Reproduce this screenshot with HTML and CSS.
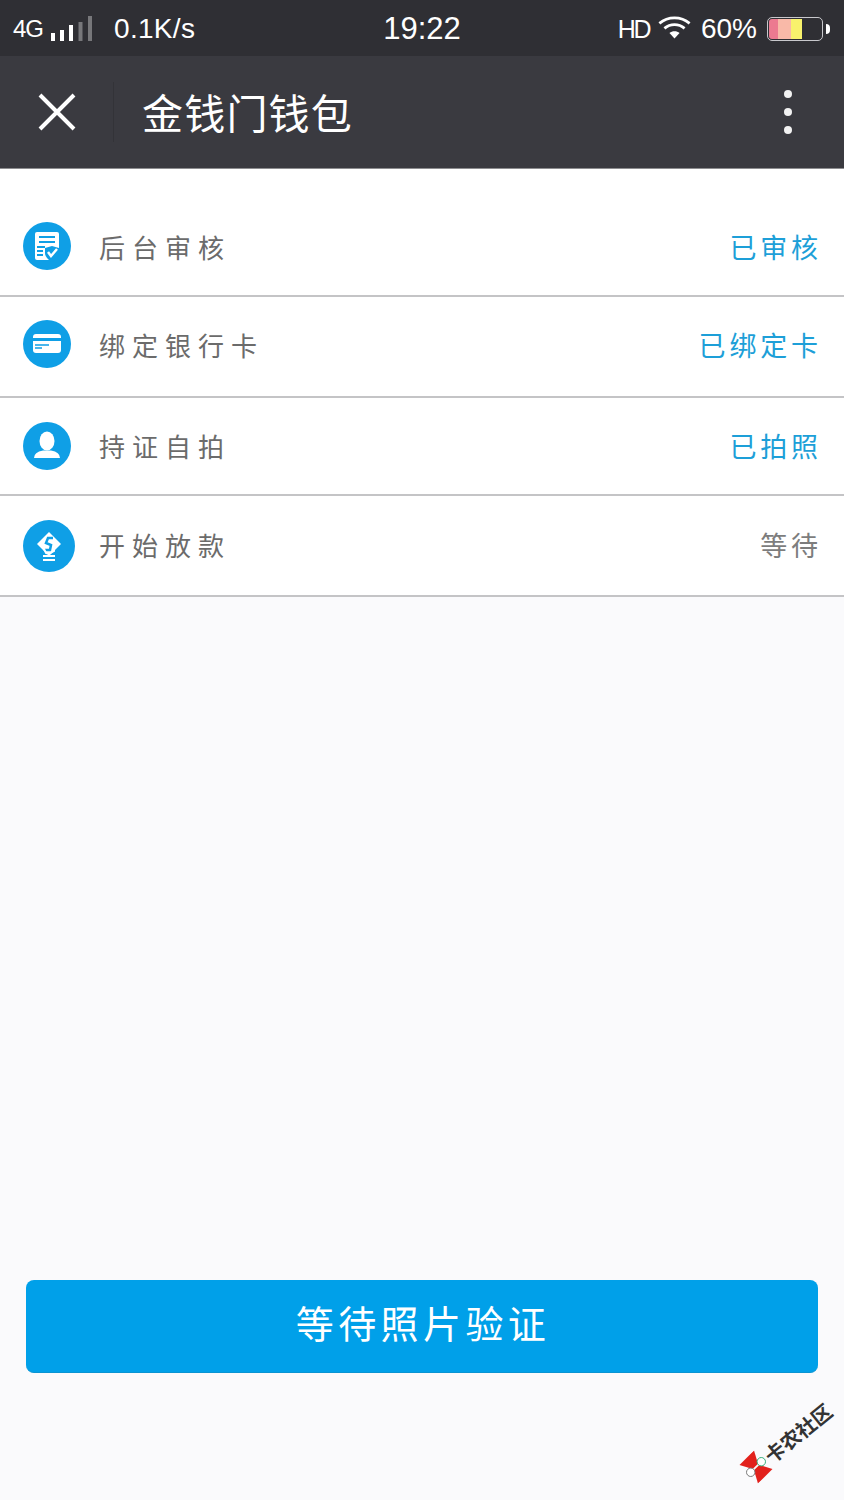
FILE: index.html
```html
<!doctype html>
<html lang="zh-CN">
  <head>
    <meta charset="UTF-8" />
    <meta name="viewport" content="width=device-width, initial-scale=1.0" />
    <title>金钱门钱包</title>
    <link rel="stylesheet" href="styles.css">
  </head>
  <body>
    <div class="status-bar">
      <div class="status-left">
        <span class="net">4G</span>
        <svg class="signal" width="44" height="28" viewBox="0 0 44 28">
          <rect x="1" y="19" width="4" height="8" fill="#fff" />
          <rect x="10" y="16" width="4" height="11" fill="#fff" />
          <rect x="19" y="11" width="4" height="16" fill="#fff" />
          <rect x="28.500" y="8" width="4" height="19" fill="#77777a" />
          <rect x="38" y="2" width="4" height="25" fill="#77777a" />
        </svg>
        <span class="speed">0.1K/s</span>
      </div>
      <div class="clock">19:22</div>
      <div class="status-right">
        <span class="hd">HD</span>
        <svg class="wifi" width="33" height="25" viewBox="0 0 36 26">
          <path d="M1.500 8.500C11 .5 25 .5 34.500 8.500" fill="none" stroke="#fff" stroke-width="3" />
          <path d="M7 14C13.500 8.500 22.500 8.500 29 14" fill="none" stroke="#fff" stroke-width="3" />
          <path d="M12.500 19C15.500 16.500 20.500 16.500 23.500 19L18 25Z" fill="#fff" />
        </svg>
        <span class="pct">60%</span>
        <div class="battery">
          <div class="battery-body">
            <span class="cell cell-red"></span>
            <span class="cell cell-pink"></span>
            <span class="cell cell-yellow"></span>
          </div>
          <span class="battery-tip"></span>
        </div>
      </div>
    </div>

    <div class="nav-bar">
      <svg class="close" width="38" height="38" viewBox="0 0 38 38">
        <path d="M2 2L36 36M36 2L2 36" stroke="#fff" stroke-width="4" fill="none" />
      </svg>
      <span class="nav-divider"></span>
      <h1 class="nav-title">金钱门钱包</h1>
      <div class="more">
        <span class="dot"></span>
        <span class="dot"></span>
        <span class="dot"></span>
      </div>
    </div>

    <div class="steps">
      <div class="step step-first">
        <svg class="step-icon" width="48" height="48" viewBox="0 0 48 48">
          <circle cx="24" cy="24" r="24" fill="#0f9fe6" />
          <path d="M14 10H34Q36 10 36 12V30L27 38H14Q12 38 12 36V12Q12 10 14 10Z" fill="#fff" />
          <path d="M16 15H32M16 20H32M14 25H22M14 29H20M14 33H20" stroke="#0f9fe6" stroke-width="2" fill="none" />
          <path d="M22 26L29 24L36 26V31Q36 36 29 40Q22 36 22 31Z" fill="#0f9fe6" />
          <path d="M25 30L28 34L34 27" stroke="#fff" stroke-width="2.500" fill="none" />
        </svg>
        <span class="step-name">后台审核</span>
        <span class="step-state state-done">已审核</span>
      </div>
      <div class="step step-card">
        <svg class="step-icon" width="48" height="48" viewBox="0 0 48 48">
          <circle cx="24" cy="24" r="24" fill="#0f9fe6" />
          <rect x="10" y="14" width="28" height="19" rx="3" fill="#fff" />
          <rect x="10" y="18" width="28" height="3" fill="#0f9fe6" />
          <path d="M12 25H26M12 28H19" stroke="#0f9fe6" stroke-width="1.500" fill="none" />
        </svg>
        <span class="step-name">绑定银行卡</span>
        <span class="step-state state-done">已绑定卡</span>
      </div>
      <div class="step step-photo">
        <svg class="step-icon" width="48" height="48" viewBox="0 0 48 48">
          <circle cx="24" cy="24" r="24" fill="#0f9fe6" />
          <ellipse cx="24" cy="19" rx="7.500" ry="9.500" fill="#fff" />
          <path d="M11 36Q11 30 20 28.500H28Q37 30 37 36Z" fill="#fff" />
        </svg>
        <span class="step-name">持证自拍</span>
        <span class="step-state state-done">已拍照</span>
      </div>
      <div class="step step-loan">
        <svg class="step-icon step-icon-big" width="52" height="52" viewBox="0 0 52 52">
          <circle cx="26" cy="26" r="26" fill="#0f9fe6" />
          <path d="M14 24L26 12L38 24L26 36Z" fill="#fff" />
          <path d="M30 18H25L23 23L28 25L27 30H21" stroke="#0f9fe6" stroke-width="2.500" fill="none" />
          <path d="M20 27L23 33Q27 34 31 31V26" stroke="#fff" stroke-width="2" fill="none" />
          <path d="M20 36H32M20 40H32" stroke="#fff" stroke-width="2" fill="none" />
        </svg>
        <span class="step-name">开始放款</span>
        <span class="step-state">等待</span>
      </div>
    </div>

    <div class="footer">
      <div class="wait-btn">等待照片验证</div>
    </div>

    <div class="watermark">
      <svg class="mark-logo" width="28" height="28" viewBox="0 0 30 30">
        <g transform="rotate(84 15 15)">
          <path d="M1 4L14 11V19L1 26Z" fill="#e2211c" />
          <path d="M29 4L16 11V19L29 26Z" fill="#e2211c" />
          <circle cx="15" cy="7" r="4.500" fill="#fff" stroke="#3a7" stroke-width="1" />
          <circle cx="15" cy="23" r="4.500" fill="#fff" stroke="#777" stroke-width="1" />
        </g>
      </svg>
      <span class="mark-text">卡农社区</span>
    </div>
  </body>
</html>
```

FILE: styles.css
```css
body {
  font-family: "Noto Sans CJK SC", "Liberation Sans", sans-serif;
  margin: 0;
  width: 844px;
  height: 1500px;
  position: relative;
  overflow: hidden;
  background-color: #fafafc;
}
.status-bar {
  height: 56px;
  padding-top: 2px;
  box-sizing: border-box;
  background: #2f2f34;
  color: #fff;
  display: grid;
  grid-template-columns: 1fr auto 1fr;
  align-items: center;
  font-family: "Liberation Sans", Roboto, sans-serif;
  font-size: 28px;
}
.status-left {
  display: flex;
  align-items: center;
  padding-left: 13px;
}
.net {
  font-size: 24px;
  letter-spacing: -1px;
  margin-right: 7px;
}
.signal {
  margin-top: -3px;
}
.speed {
  margin-left: 20px;
  letter-spacing: 0.300px;
}
.clock {
  font-size: 31px;
}
.status-right {
  display: flex;
  align-items: center;
  justify-content: flex-end;
  padding-right: 14px;
}
.hd {
  font-size: 25px;
  letter-spacing: -2.500px;
  margin-right: 9px;
}
.wifi {
  margin-top: -4px;
  margin-right: 10px;
}
.pct {
  margin-right: 10px;
}
.battery {
  display: flex;
  align-items: center;
}
.battery-body {
  width: 52px;
  height: 20px;
  padding: 1px;
  display: flex;
  border: 1px solid #c8c8cc;
  border-radius: 5px;
  margin-right: 3px;
}
.cell {
  height: 100%;
}
.cell-red {
  width: 9px;
  background: #ec7a90;
  border-radius: 3px 0 0 3px;
}
.cell-pink {
  width: 13px;
  background: #f9b9a8;
}
.cell-yellow {
  width: 11px;
  background: #f8f26c;
}
.battery-tip {
  width: 4px;
  height: 10px;
  background: #fff;
  border-radius: 0 4px 4px 0;
}
.nav-bar {
  height: 112px;
  background: #3a3a40;
  border-bottom: 1px solid #8d8d90;
  display: flex;
  align-items: center;
  color: #fff;
}
.close {
  margin-left: 38px;
}
.nav-divider {
  width: 1px;
  height: 60px;
  margin-left: 37px;
  background: #333338;
}
.nav-title {
  flex: 1;
  margin: 0 0 2px 28px;
  font-size: 41px;
  font-weight: 400;
  letter-spacing: 1.200px;
}
.more {
  display: flex;
  flex-direction: column;
  gap: 10px;
  margin-right: 52px;
}
.dot {
  width: 8px;
  height: 8px;
  border-radius: 50%;
  background: #f2f2f2;
}
.steps {
  background: #fff;
}
.step {
  display: flex;
  align-items: center;
  padding: 0 26px 0 23px;
  border-bottom: 2px solid #c4c4c6;
  box-sizing: border-box;
}
.step-first {
  height: 128px;
  padding-top: 27px;
}
.step-first .step-name,
.step-first .step-state {
  padding-top: 2px;
}
.step-card {
  height: 101px;
  padding-bottom: 5px;
}
.step-photo {
  height: 98px;
}
.step-photo .step-name,
.step-photo .step-state {
  padding-bottom: 2px;
}
.step-loan {
  height: 101px;
}
.step-loan .step-name,
.step-loan .step-state {
  padding-bottom: 3px;
}
.step-icon {
  flex: none;
  margin-right: 28px;
}
.step-icon-big {
  margin-right: 24px;
}
.step-name {
  flex: 1;
  font-size: 26px;
  letter-spacing: 7px;
  color: #6b6b6b;
}
.step-state {
  font-size: 27px;
  letter-spacing: 3.800px;
  margin-right: -3.800px;
  color: #7d7d7d;
}
.state-done {
  color: #1d9fd8;
}
.footer {
  padding: 683px 26px 0;
}
.wait-btn {
  height: 93px;
  padding: 0 0 10px 2px;
  box-sizing: border-box;
  background: #00a0e9;
  border-bottom: 1px solid #0a94d2;
  border-radius: 8px;
  color: #fff;
  font-size: 38px;
  letter-spacing: 4.400px;
  display: flex;
  align-items: center;
  justify-content: center;
}
.watermark {
  position: absolute;
  left: 742px;
  top: 1453px;
  display: flex;
  align-items: center;
  white-space: nowrap;
  transform: rotate(-39deg);
  transform-origin: 14px 14px;
  color: #333;
  font-weight: 700;
  font-size: 20px;
  line-height: 28px;
}
```
